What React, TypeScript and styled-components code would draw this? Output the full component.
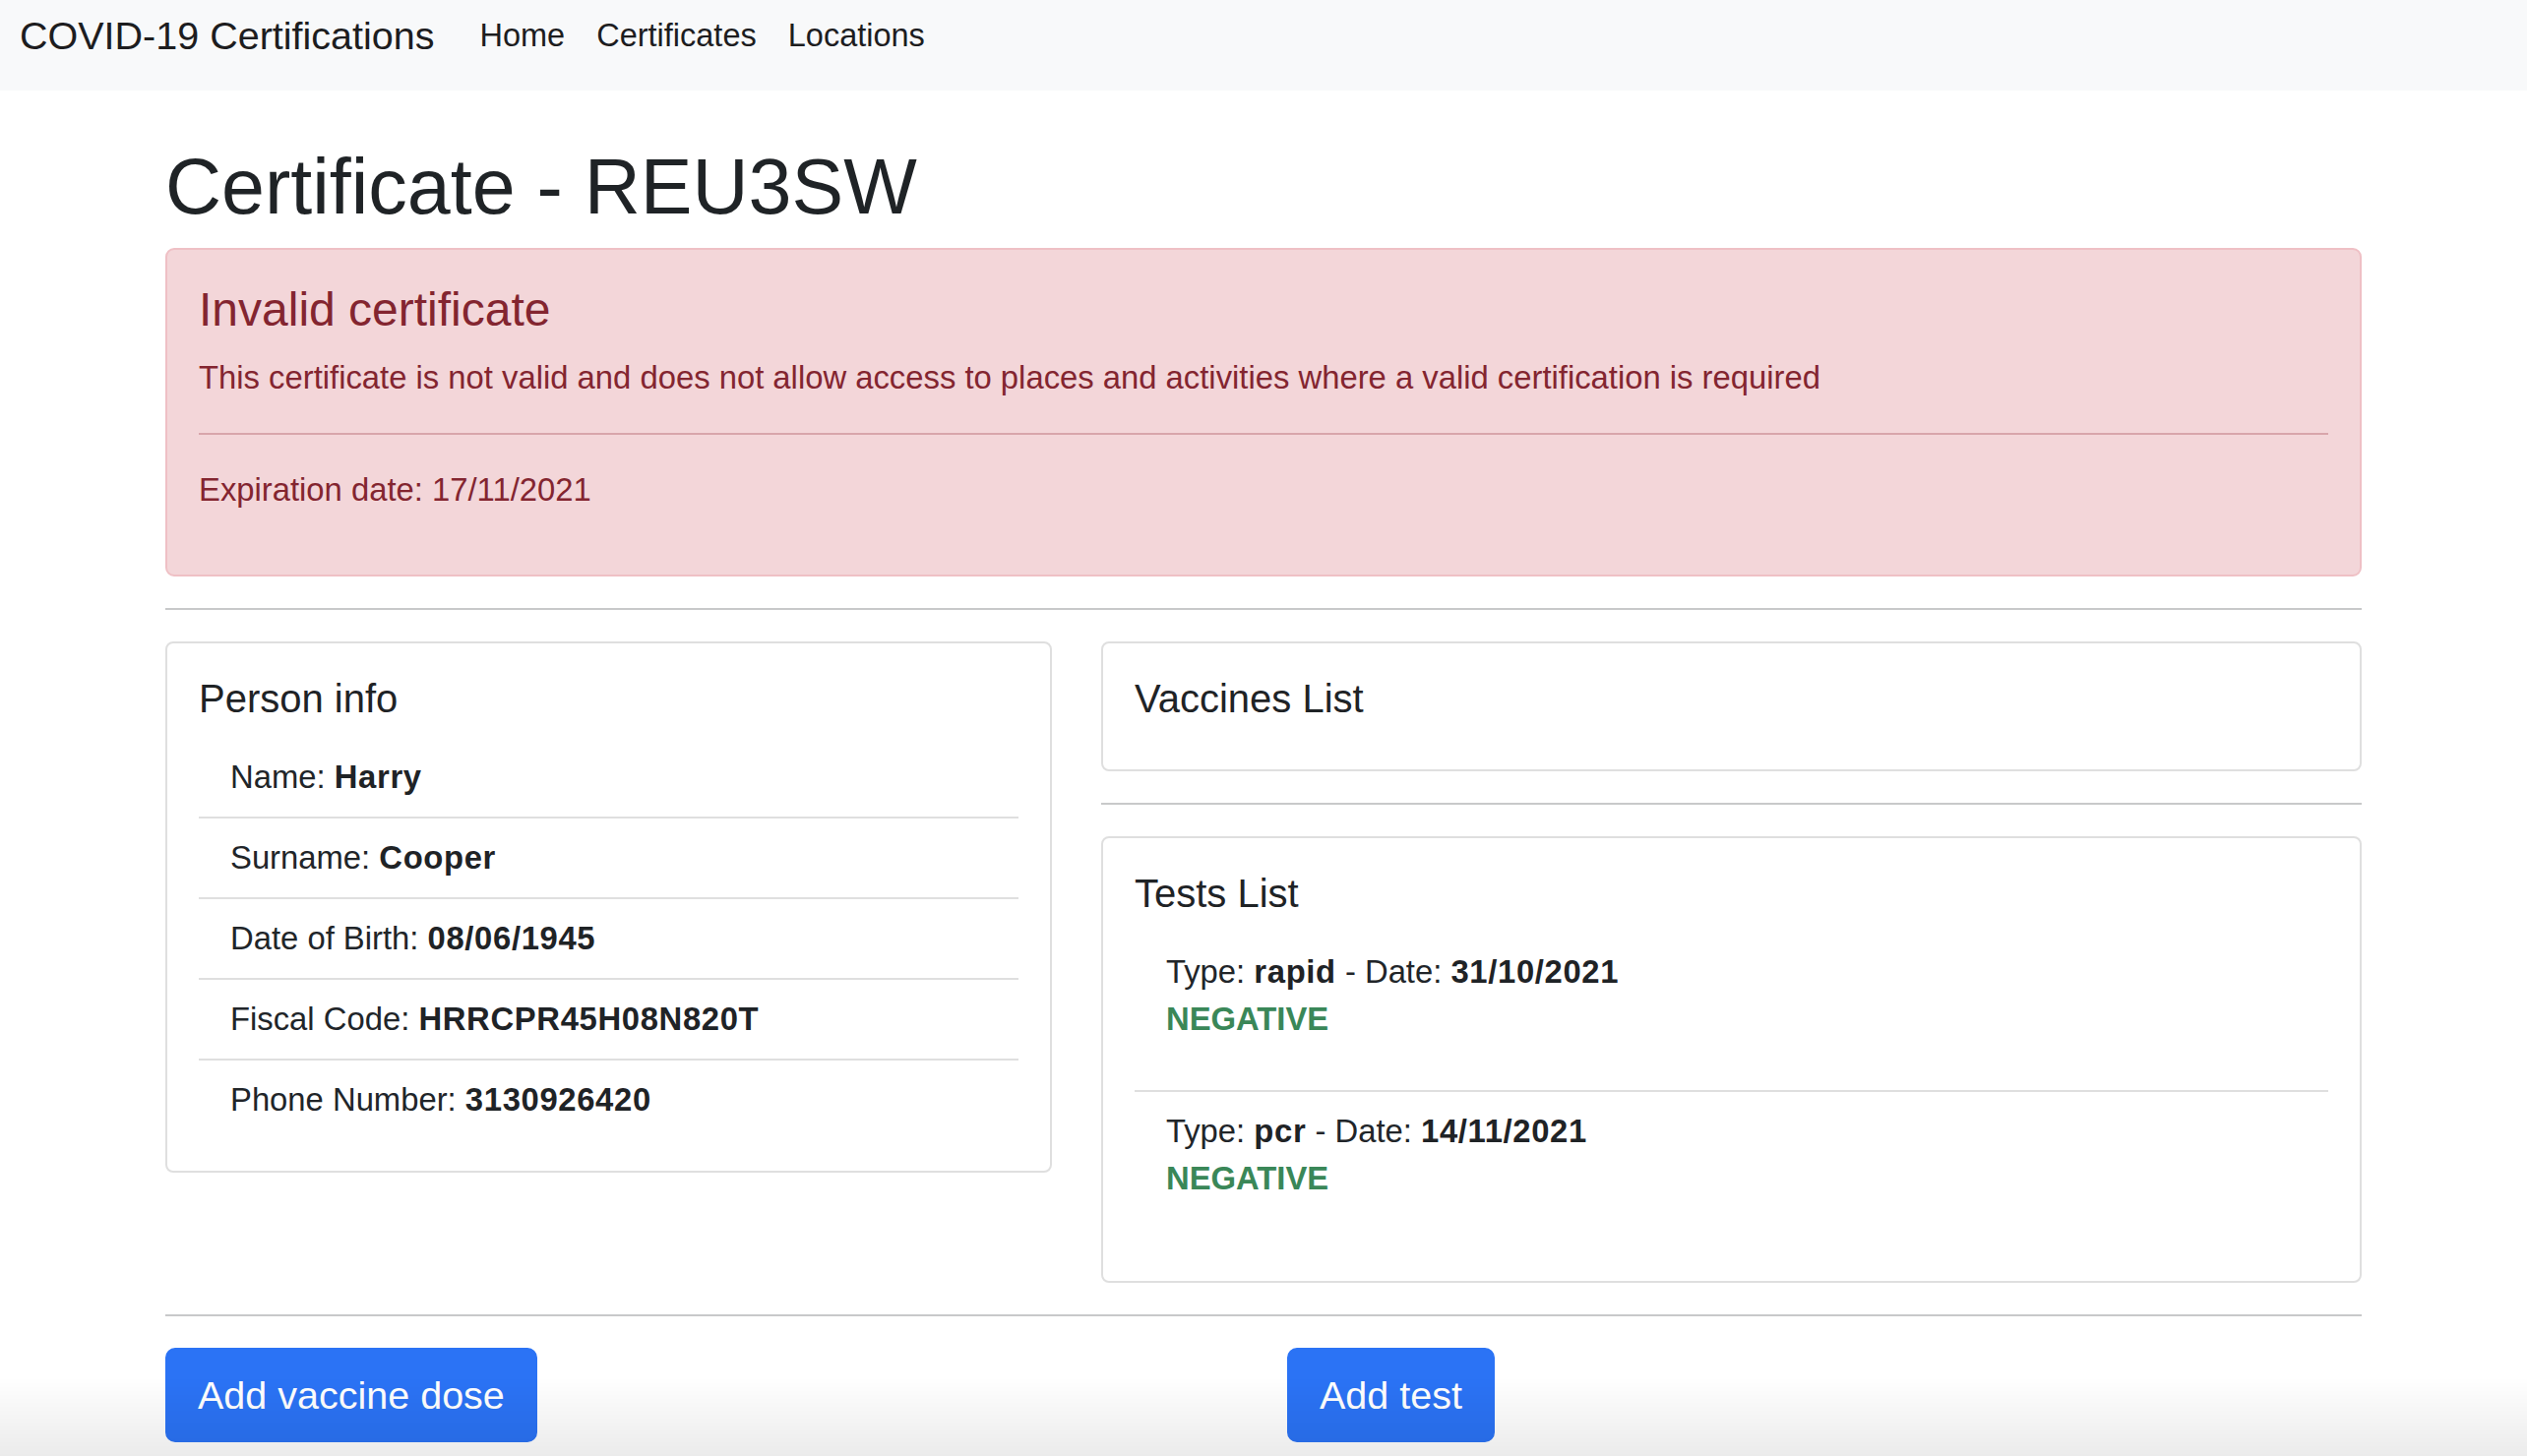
import React from 'react'
import styled, {createGlobalStyle} from "styled-components"

const GlobalStyle = createGlobalStyle`
    * {
        box-sizing: border-box;
    }
    body {
        margin: 0;
        background: #ffffff;
        color: #212529;
        font-family: "Liberation Sans", Arial, sans-serif;
        font-size: 32.8px;
        line-height: 48px;
    }
`

type Person = { label: string, value: string }
type Test = { type: string, date: string, result: string }

const person: Person[] = [
    {label: "Name", value: "Harry"},
    {label: "Surname", value: "Cooper"},
    {label: "Date of Birth", value: "08/06/1945"},
    {label: "Fiscal Code", value: "HRRCPR45H08N820T"},
    {label: "Phone Number", value: "3130926420"},
]

const tests: Test[] = [
    {type: "rapid", date: "31/10/2021", result: "NEGATIVE"},
    {type: "pcr", date: "14/11/2021", result: "NEGATIVE"},
]

function App() {
    return (
        <>
            <GlobalStyle/>
            <Navbar>
                <NavInner>
                    <Brand href="#">COVID-19 Certifications</Brand>
                    <NavLinks>
                        <NavLink href="#">Home</NavLink>
                        <NavLink href="#">Certificates</NavLink>
                        <NavLink href="#">Locations</NavLink>
                    </NavLinks>
                </NavInner>
            </Navbar>
            <Container>
                <Title>Certificate - REU3SW</Title>
                <Alert>
                    <AlertHeading>Invalid certificate</AlertHeading>
                    <Paragraph>
                        This certificate is not valid and does not allow access to places and activities where a valid certification is required
                    </Paragraph>
                    <Rule tone="alert"/>
                    <Paragraph>Expiration date: 17/11/2021</Paragraph>
                </Alert>
                <Rule/>
                <Columns>
                    <div>
                        <Card>
                            <CardTitle>Person info</CardTitle>
                            <List>
                                {person.map(p => (
                                    <ListItem key={p.label}>
                                        {p.label}: <b>{p.value}</b>
                                    </ListItem>
                                ))}
                            </List>
                        </Card>
                    </div>
                    <RightColumn>
                        <Card>
                            <CardTitle>Vaccines List</CardTitle>
                        </Card>
                        <Rule/>
                        <Card>
                            <CardTitle>Tests List</CardTitle>
                            <List>
                                {tests.map(t => (
                                    <ListItem key={t.date}>
                                        <div>Type: <b>{t.type}</b> - Date: <b>{t.date}</b></div>
                                        <Result>{t.result}</Result>
                                    </ListItem>
                                ))}
                            </List>
                        </Card>
                    </RightColumn>
                </Columns>
                <Rule/>
                <Actions>
                    <div><Button>Add vaccine dose</Button></div>
                    <div><Button>Add test</Button></div>
                </Actions>
            </Container>
            <BottomShade/>
        </>
    )
}

export default App

const Navbar = styled.nav`
    background-color: #f8f9fa;
    height: 92px;
    padding: 0 20px;
`

const NavInner = styled.div`
    display: flex;
    align-items: center;
    height: 72px;
`

const Brand = styled.a`
    font-size: 39.5px;
    line-height: 60px;
    color: #1d1d1f;
    text-decoration: none;
    margin-right: 30px;
`

const NavLinks = styled.div`
    display: flex;
`

const NavLink = styled.a`
    font-size: 32.5px;
    line-height: 48px;
    padding: 0 16px;
    color: #1d1d1f;
    text-decoration: none;
`

const Container = styled.main`
    width: 2232px;
    margin: 0 auto;
    padding-bottom: 40px;
`

const Title = styled.h1`
    font-size: 79px;
    font-weight: 500;
    line-height: 96px;
    margin: 50px 0 14px;
    color: #1f2326;
`

const Alert = styled.div`
    background-color: #f3d6d9;
    border: 2px solid #efc0c5;
    border-radius: 9px;
    color: #832530;
    padding: 32px 32px 30px;
    margin-bottom: 32px;
`

const AlertHeading = styled.h4`
    font-size: 48px;
    font-weight: 500;
    line-height: 57.6px;
    margin: 0 0 16px;
`

const Paragraph = styled.p`
    margin: 0 0 32px;
`

const Rule = styled.hr<{ tone?: "alert" }>`
    border: 0;
    border-top: 2px solid ${p => p.tone === "alert" ? "#d8a5ab" : "#c8c9ca"};
    margin: 32px 0;
`

const Columns = styled.div`
    display: grid;
    grid-template-columns: 901px 1fr;
    column-gap: 50px;
    align-items: start;
`

const RightColumn = styled.div`
    display: flex;
    flex-direction: column;

    & > hr {
        align-self: stretch;
        width: 100%;
    }
`

const Card = styled.section`
    border: 2px solid #dfdfdf;
    border-radius: 8px;
    padding: 32px;
    background: #fff;
`

const CardTitle = styled.h5`
    font-size: 40px;
    font-weight: 500;
    line-height: 48px;
    margin: 0 0 16px;
    color: #1f2326;
`

const List = styled.ul`
    list-style: none;
    margin: 0;
    padding: 0;
`

const ListItem = styled.li`
    padding: 16px 32px;
    border-bottom: 2px solid #dfdfdf;

    &:last-child {
        border-bottom: none;
    }

    b {
        font-weight: 700;
        letter-spacing: 0.02em;
        color: #1f2326;
    }
`

const Result = styled.p`
    margin: 0 0 32px;
    color: #3a8758;
    font-weight: 700;
`

const Actions = styled.div`
    display: grid;
    grid-template-columns: 1140px 1fr;
`

const Button = styled.button`
    font-family: "Liberation Sans", Arial, sans-serif;
    font-size: 39.5px;
    line-height: 60px;
    padding: 16px 31px;
    border: 2px solid #2b73f5;
    border-radius: 10px;
    background-color: #2b73f5;
    color: #fff;
    cursor: pointer;
`

const BottomShade = styled.div`
    position: fixed;
    left: 0;
    right: 0;
    bottom: 0;
    height: 80px;
    pointer-events: none;
    background: linear-gradient(to bottom, rgba(0,0,0,0), rgba(0,0,0,0.08));
`
